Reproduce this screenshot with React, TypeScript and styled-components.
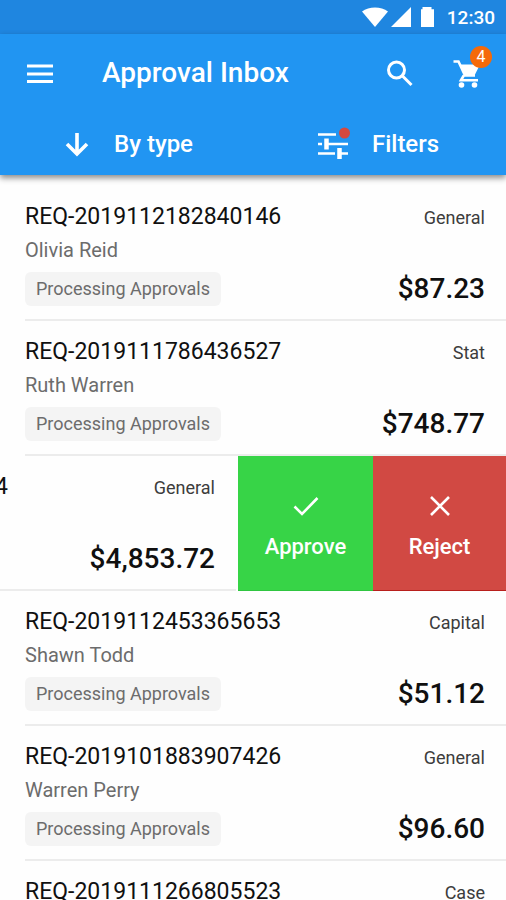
import React from "react";
import styled, { createGlobalStyle } from "styled-components";

const GlobalStyle = createGlobalStyle`
  * { box-sizing: border-box; }
  html, body, #root { height: 100%; }
  body {
    margin: 0;
    background: #fefefe;
    color: #101010;
    font-family: Roboto, "Liberation Sans", sans-serif;
  }
`;

const Screen = styled.div`
  display: flex;
  flex-direction: column;
  height: 100%;
  overflow: hidden;
`;

const StatusBar = styled.div`
  display: flex;
  flex: none;
  align-items: center;
  justify-content: flex-end;
  height: 34px;
  padding-right: 11px;
  background: #1f86e0;
  color: #fff;
  font-size: 19px;
  font-weight: 500;
`;

const StatusIcons = styled.span`
  display: flex;
  align-items: center;
  margin-right: 11px;
`;

const Header = styled.header`
  position: relative;
  flex: none;
  background: #2195f2;
  color: #fff;
  box-shadow: 0 3px 6px rgba(0, 0, 0, 0.45);
`;

const TitleBar = styled.div`
  display: flex;
  align-items: center;
  height: 78px;
  padding: 0 22px 0 24px;
`;

const Title = styled.h1`
  flex: 1;
  margin: 0 0 0 46px;
  font-size: 28px;
  font-weight: 500;
  line-height: 36px;
`;

const IconButton = styled.button`
  position: relative;
  display: flex;
  align-items: center;
  justify-content: center;
  width: 32px;
  height: 32px;
  padding: 0;
  border: 0;
  background: none;
  color: inherit;
  cursor: pointer;

  & + & {
    margin-left: 36px;
  }
`;

const CartBadge = styled.span`
  position: absolute;
  top: -11px;
  right: -8px;
  width: 22px;
  height: 22px;
  border-radius: 50%;
  background: #f56a0a;
  font-family: Roboto, sans-serif;
  font-size: 16px;
  line-height: 22px;
  text-align: center;
`;

const Tools = styled.div`
  display: grid;
  grid-template-columns: 1fr 1fr;
  height: 63px;
`;

const ToolButton = styled.button`
  display: flex;
  align-items: center;
  justify-content: center;
  gap: 24px;
  padding: 0 0 0 4px;
  border: 0;
  background: none;
  color: inherit;
  font: 500 24px/28px Roboto, sans-serif;
  cursor: pointer;

  & + & {
    padding: 0 4px 0 0;
    gap: 22px;
  }
`;

const List = styled.ul`
  flex: none;
  margin: 0;
  padding: 11px 0 0;
  list-style: none;
`;

const Row = styled.li`
  display: flex;
  justify-content: flex-end;
  height: 135px;
  overflow: hidden;
`;

const Request = styled.article`
  display: grid;
  flex: 0 0 100%;
  grid-template-columns: 1fr auto;
  padding-left: 25px;
`;

const Details = styled.div`
  display: flex;
  flex-direction: column;
  align-items: flex-start;
  padding-top: 16px;
  border-bottom: 2px solid #ececec;
`;

const Summary = styled(Details)`
  align-items: flex-end;
  justify-content: space-between;
  padding: 20px 21px 12px 0;
`;

const RequestId = styled.h2`
  min-width: 253px;
  margin: 0;
  font-size: 23px;
  font-weight: 400;
  line-height: 30px;
  text-align: right;
`;

const Requester = styled.div`
  margin-top: 4px;
  color: #6c6c6c;
  font-size: 20px;
  line-height: 28px;
`;

const Status = styled.span`
  margin-top: 8px;
  padding: 0 11px;
  border-radius: 6px;
  background: #f4f4f4;
  color: #6c6c6c;
  font-size: 18px;
  line-height: 34px;
`;

const Category = styled.span`
  color: #3c3c3c;
  font-size: 18px;
  line-height: 24px;
`;

const Amount = styled.strong`
  font-size: 28px;
  font-weight: 500;
  line-height: 36px;
`;

const Actions = styled.div`
  display: grid;
  flex: 0 0 270px;
  grid-template-columns: 135px 1fr;
  padding-left: 2px;
`;

const ActionButton = styled.button<{ $color: string; $edge: string }>`
  display: flex;
  flex-direction: column;
  align-items: center;
  justify-content: center;
  gap: 13px;
  padding: 6px 0 0;
  border: 0;
  background: ${(p) => p.$color};
  box-shadow: inset 0 -1px ${(p) => p.$edge};
  color: #fff;
  font: 500 22px/28px Roboto, sans-serif;
  cursor: pointer;
`;

const WifiIcon = () => (
  <svg width="26" height="20" viewBox="0 0 26 20" fill="currentColor" aria-hidden="true">
    <path d="M0 4.500C7 -1 19 -1 26 4.500L13 20Z" />
  </svg>
);

const SignalIcon = () => (
  <svg width="26" height="20" viewBox="0 0 26 20" fill="currentColor" aria-hidden="true">
    <path d="M3 20H23V0Z" />
  </svg>
);

const BatteryIcon = () => (
  <svg width="22" height="20" viewBox="0 0 22 20" fill="currentColor" aria-hidden="true">
    <path d="M8.500 2.200V0H17.500V2.200H20V20H7V2.200Z" />
  </svg>
);

const MenuIcon = () => (
  <svg width="32" height="32" viewBox="0 0 32 32" stroke="currentColor" strokeWidth="2.800" aria-hidden="true">
    <path d="M3 9H29M3 17H29M3 24.500H29" />
  </svg>
);

const SearchIcon = () => (
  <svg width="32" height="32" viewBox="0 0 32 32" fill="none" stroke="currentColor" strokeWidth="3" aria-hidden="true">
    <circle cx="12.500" cy="13" r="8" />
    <path d="M18 18.500L27.500 28" />
  </svg>
);

const CartIcon = () => (
  <svg width="32" height="32" viewBox="0 0 32 32" aria-hidden="true">
    <path d="M7.500 7.500H28L22.500 18.500H13Z" fill="currentColor" />
    <path
      d="M1.500 4.500H6.500L13 18.500H23M11.800 18.500L9 23.300H26"
      fill="none"
      stroke="currentColor"
      strokeWidth="2.600"
    />
    <circle cx="9.500" cy="28" r="2.800" fill="currentColor" />
    <circle cx="22.500" cy="28" r="2.800" fill="currentColor" />
  </svg>
);

const ArrowDownIcon = () => (
  <svg width="26" height="28" viewBox="0 0 26 28" fill="none" stroke="currentColor" strokeWidth="3.600" aria-hidden="true">
    <path d="M13 3V23M3 14L13 24L23 14" />
  </svg>
);

const TuneIcon = () => (
  <svg width="34" height="34" viewBox="0 0 34 34" fill="none" stroke="currentColor" aria-hidden="true">
    <path strokeWidth="2.600" d="M2 7.500H20M2 17H6M11 17H32M2 26.500H19M24 26.500H32" />
    <path strokeWidth="4.500" d="M10.500 11.500V22.500M23.500 21V32" />
    <circle cx="28.500" cy="6" r="5.500" fill="#d5493f" stroke="none" />
  </svg>
);

const CheckIcon = () => (
  <svg width="28" height="28" viewBox="0 0 28 28" fill="none" stroke="currentColor" strokeWidth="2.600" aria-hidden="true">
    <path d="M2.500 14.500L10 22L25.500 6" />
  </svg>
);

const CrossIcon = () => (
  <svg width="28" height="28" viewBox="0 0 28 28" fill="none" stroke="currentColor" strokeWidth="2.600" aria-hidden="true">
    <path d="M5 5L23 23M23 5L5 23" />
  </svg>
);

interface Item {
  id: string;
  name?: string;
  category: string;
  amount?: string;
  swiped?: boolean;
}

const items: Item[] = [
  { id: "REQ-2019112182840146", name: "Olivia Reid", category: "General", amount: "$87.23" },
  { id: "REQ-2019111786436527", name: "Ruth Warren", category: "Stat", amount: "$748.77" },
  { id: "4", category: "General", amount: "$4,853.72", swiped: true },
  { id: "REQ-2019112453365653", name: "Shawn Todd", category: "Capital", amount: "$51.12" },
  { id: "REQ-2019101883907426", name: "Warren Perry", category: "General", amount: "$96.60" },
  { id: "REQ-2019111266805523", category: "Case" },
];

export default function App() {
  return (
    <Screen>
      <GlobalStyle />
      <StatusBar>
        <StatusIcons>
          <WifiIcon />
          <SignalIcon />
          <BatteryIcon />
        </StatusIcons>
        <time>12:30</time>
      </StatusBar>
      <Header>
        <TitleBar>
          <IconButton aria-label="Menu"><MenuIcon /></IconButton>
          <Title>Approval Inbox</Title>
          <IconButton aria-label="Search"><SearchIcon /></IconButton>
          <IconButton aria-label="Cart">
            <CartIcon />
            <CartBadge>4</CartBadge>
          </IconButton>
        </TitleBar>
        <Tools>
          <ToolButton><ArrowDownIcon />By type</ToolButton>
          <ToolButton><TuneIcon />Filters</ToolButton>
        </Tools>
      </Header>
      <List>
        {items.map((item) => (
          <Row key={item.id}>
            <Request>
              <Details>
                <RequestId>{item.id}</RequestId>
                {item.name && <Requester>{item.name}</Requester>}
                {item.name && <Status>Processing Approvals</Status>}
              </Details>
              <Summary>
                <Category>{item.category}</Category>
                {item.amount && <Amount>{item.amount}</Amount>}
              </Summary>
            </Request>
            {item.swiped && (
              <Actions>
                <ActionButton $color="#37d447" $edge="#2fc540"><CheckIcon />Approve</ActionButton>
                <ActionButton $color="#d14943" $edge="#b81f1c"><CrossIcon />Reject</ActionButton>
              </Actions>
            )}
          </Row>
        ))}
      </List>
    </Screen>
  );
}
